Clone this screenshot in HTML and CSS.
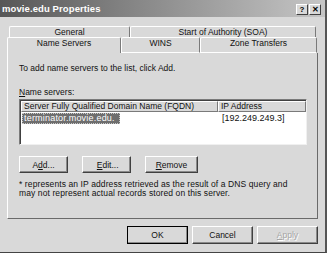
FILE: index.html
```html
<!DOCTYPE html>
<html lang="en">
<head>
  <meta charset="UTF-8" />
  <title>movie.edu Properties</title>
  <link rel="stylesheet" href="styles.css">
</head>
<body>
  <div class="window">
    <div class="titlebar">
      <span class="title">movie.edu Properties</span>
      <div class="title-buttons">
        <span class="tbtn">?</span>
        <span class="tbtn">✕</span>
      </div>
    </div>

    <!-- Tabs -->
    <div class="tabs">
      <div class="tab-row row-back">
        <div class="tab tab-general">General</div>
        <div class="tab tab-soa">Start of Authority (SOA)</div>
      </div>
      <div class="tab-row row-front">
        <div class="tab tab-ns active">Name Servers</div>
        <div class="tab tab-wins">WINS</div>
        <div class="tab tab-zone">Zone Transfers</div>
      </div>
    </div>

    <div class="panel">
      <p class="intro">To add name servers to the list, click Add.</p>
      <p class="list-label"><u>N</u>ame servers:</p>

      <div class="listbox">
        <div class="list-head">
          <div class="col col-name">Server Fully Qualified Domain Name (FQDN)</div>
          <div class="col col-ip">IP Address</div>
        </div>
        <div class="list-row">
          <div class="cell cell-name"><span class="selected">terminator.movie.edu.</span></div>
          <div class="cell cell-ip">[192.249.249.3]</div>
        </div>
      </div>

      <div class="btn-row">
        <button class="btn btn-small">A<u>d</u>d...</button>
        <button class="btn btn-small">&nbsp;<u>E</u>dit...</button>
        <button class="btn btn-small btn-remove"><u>R</u>emove</button>
      </div>

      <p class="note">* represents an IP address retrieved as the result of a DNS query and may not represent actual records stored on this server.</p>
    </div>

    <div class="dialog-buttons">
      <button class="btn btn-default">OK</button>
      <button class="btn">Cancel</button>
      <button class="btn btn-disabled"><u>A</u>pply</button>
    </div>
  </div>
</body>
</html>
```

FILE: styles.css
```css
* {
  box-sizing: border-box;
  margin: 0;
  padding: 0;
}

body {
  font-family: 'Liberation Sans', Arial, sans-serif;
  font-size: 8.5px;
  color: #111;
  background: #d9d9d9;
  width: 327px;
  height: 253px;
  overflow: hidden;
}

.window {
  width: 327px;
  height: 253px;
  background: #d9d9d9;
  border-right: 2px solid #555;
  border-bottom: 1px solid #444;
  display: flex;
  flex-direction: column;
}

/* title bar */
.titlebar {
  height: 17px;
  background: linear-gradient(to right, #575757 0%, #8a8a8a 45%, #c6c6c6 100%);
  display: flex;
  justify-content: space-between;
  align-items: center;
  padding: 0 4px 0 2px;
}

.title {
  color: #fff;
  font-weight: bold;
  font-size: 9.5px;
  letter-spacing: 0.1px;
}

.title-buttons {
  display: flex;
  gap: 1px;
  margin-top: 2px;
}

.tbtn {
  width: 12px;
  height: 11px;
  background: #d9d9d9;
  border: 1px solid;
  border-color: #fff #404040 #404040 #fff;
  font-size: 8px;
  font-weight: bold;
  line-height: 9px;
  text-align: center;
  color: #000;
}

/* tabs */
.tabs {
  padding-top: 9px;
}

.tab-row {
  display: flex;
}

.row-back {
  margin-left: 9px;
  height: 11px;
}

.row-front {
  margin-left: 7px;
  height: 16px;
}

.tab {
  border-top: 1px solid #fff;
  border-left: 1px solid #fff;
  border-right: 1px solid #7a7a7a;
  border-radius: 2px 2px 0 0;
  text-align: center;
  color: #111;
}

.row-back .tab {
  line-height: 10px;
}

.row-front .tab {
  line-height: 9px;
  padding-top: 1px;
  border-bottom: 1px solid #fff;
}

.row-front .tab.active {
  border-bottom: none;
}

.tab-general { width: 121px; }
.tab-soa { width: 186px; }
.tab-ns { width: 114px; }
.tab-wins { width: 79px; }
.tab-zone { width: 117px; }

/* panel */
.panel {
  margin-left: 7px;
  width: 311px;
  height: 166px;
  border-left: 1px solid #fff;
  border-right: 1px solid #6a6a6a;
  border-bottom: 1px solid #6a6a6a;
  padding: 10px 11px 0 11px;
}

.intro {
  line-height: 10px;
}

.list-label {
  margin-top: 14px;
  line-height: 10px;
}

.listbox {
  margin-top: 2px;
  width: 288px;
  height: 46px;
  background: #fff;
  border: 1px solid;
  border-color: #7a7a7a #f0f0f0 #f0f0f0 #7a7a7a;
  box-shadow: inset 1px 1px 0 #404040;
}

.list-head {
  display: flex;
  height: 11px;
  margin: 1px 0 0 1px;
}

.col {
  background: #d9d9d9;
  border: 1px solid;
  border-color: #fff #7a7a7a #7a7a7a #fff;
  line-height: 9px;
  padding-left: 2px;
}

.col-name { width: 197px; }
.col-ip { width: 88px; }

.list-row {
  display: flex;
  margin-top: 1px;
  height: 11px;
  font-size: 9px;
}

.cell-name {
  width: 199px;
  padding-left: 2px;
}

.cell-ip {
  padding-left: 3px;
  line-height: 11px;
}

.selected {
  display: inline-block;
  height: 11px;
  line-height: 9px;
  background: #6e6e6e;
  color: #fff;
  border: 1px dotted #c8c8c8;
  padding: 0 4px 0 1px;
  letter-spacing: 0.2px;
}

/* buttons */
.btn-row {
  display: flex;
  gap: 14px;
  margin-top: 11px;
}

.btn {
  font-family: 'Liberation Sans', Arial, sans-serif;
  font-size: 8.5px;
  color: #111;
  background: #d9d9d9;
  border: 1px solid;
  border-color: #fff #404040 #404040 #fff;
  box-shadow: inset -1px -1px 0 #8a8a8a;
  width: 61px;
  height: 18px;
}

.btn-small {
  width: 49px;
  height: 17px;
}

.btn-remove {
  width: 53px;
}

.note {
  margin-top: 7px;
  line-height: 9px;
  width: 280px;
  letter-spacing: 0.1px;
}

.dialog-buttons {
  display: flex;
  gap: 4px;
  padding-left: 127px;
  margin-top: 7px;
}

.btn-default {
  outline: 1px solid #000;
  outline-offset: -1px;
}

.btn-disabled {
  color: #a5a5a5;
  text-shadow: 1px 1px 0 #fff;
}
```
